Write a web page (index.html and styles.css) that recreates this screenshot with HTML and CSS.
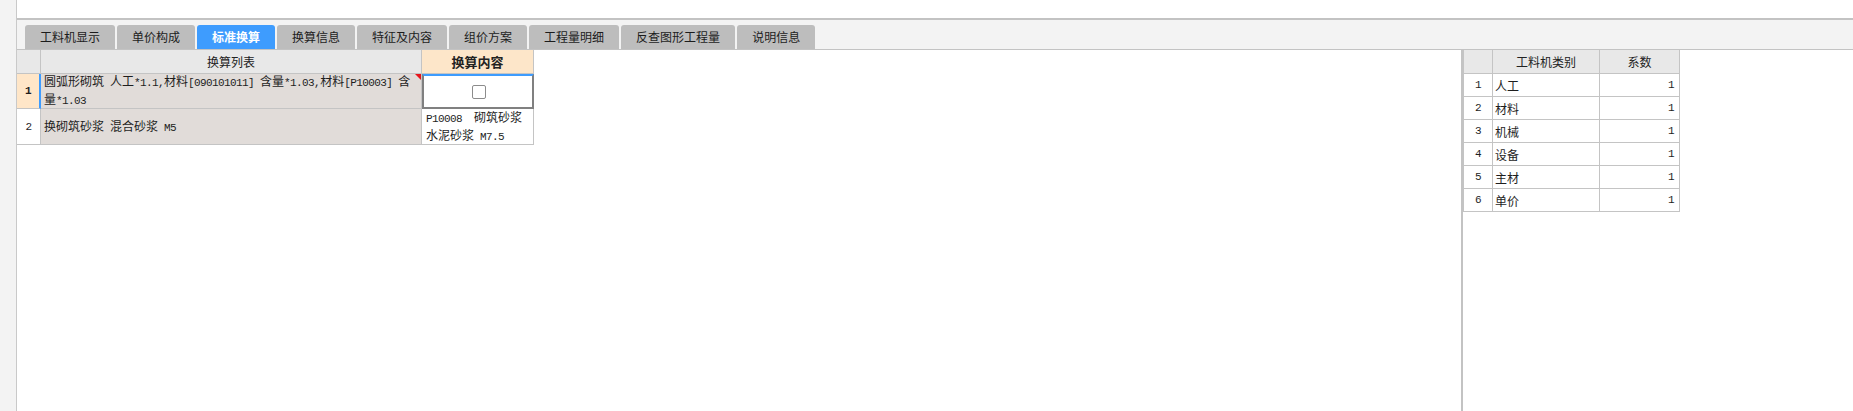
FILE: index.html
```html
<!DOCTYPE html>
<html lang="zh-CN">
<head>
<meta charset="utf-8">
<title>标准换算</title>
<link rel="stylesheet" href="styles.css">
</head>
<body>
<div class="app">
  <aside class="rail"></aside>
  <div class="main">
    <div class="topbar"></div>
    <nav class="tabs">
      <div class="tab">工料机显示</div>
      <div class="tab">单价构成</div>
      <div class="tab on">标准换算</div>
      <div class="tab">换算信息</div>
      <div class="tab">特征及内容</div>
      <div class="tab">组价方案</div>
      <div class="tab">工程量明细</div>
      <div class="tab">反查图形工程量</div>
      <div class="tab">说明信息</div>
    </nav>
    <div class="panes">
      <section class="pane-left">
        <div class="conv">
          <div class="hc"></div>
          <div class="hc">换算列表</div>
          <div class="hc hl">换算内容</div>

          <div class="c num cur"><span class="en">1</span></div>
          <div class="c list"><span>圆弧形砌筑<span class="en"> </span>人工<span class="en">*1.1,</span>材料<span class="en">[090101011] </span>含量<span class="en">*1.03,</span>材料<span class="en">[P10003] </span>含量<span class="en">*1.03</span></span><i class="flag"></i></div>
          <div class="c val sel"><span class="chk"></span></div>

          <div class="c num"><span class="en">2</span></div>
          <div class="c list"><span>换砌筑砂浆<span class="en"> </span>混合砂浆<span class="en"> M5</span></span></div>
          <div class="c val"><span><span class="en">P10008  </span>砌筑砂浆<span class="en"> </span>水泥砂浆<span class="en"> M7.5</span></span></div>
        </div>
      </section>
      <section class="pane-right">
        <div class="coef">
          <div class="h"></div>
          <div class="h">工料机类别</div>
          <div class="h">系数</div>

          <div class="n en">1</div><div class="t">人工</div><div class="v en">1</div>
          <div class="n en">2</div><div class="t">材料</div><div class="v en">1</div>
          <div class="n en">3</div><div class="t">机械</div><div class="v en">1</div>
          <div class="n en">4</div><div class="t">设备</div><div class="v en">1</div>
          <div class="n en">5</div><div class="t">主材</div><div class="v en">1</div>
          <div class="n en">6</div><div class="t">单价</div><div class="v en">1</div>
        </div>
      </section>
    </div>
  </div>
</div>
</body>
</html>
```

FILE: styles.css
```css
* { box-sizing: border-box; }
html, body { margin: 0; padding: 0; }
body {
  width: 1853px;
  height: 411px;
  overflow: hidden;
  background: #fff;
  font-family: "Noto Sans CJK SC", "Noto Sans", sans-serif;
  font-size: 12px;
  color: #1e1e1e;
}
.en {
  font-family: "Liberation Mono", "Noto Sans CJK SC", monospace;
  font-size: 11px;
  letter-spacing: -0.6px;
  white-space: pre-wrap;
}
.app { display: flex; height: 411px; }
.rail {
  flex: none;
  width: 17px;
  background: #f3f3f3;
  border-right: 1px solid #c9c9c9;
}
.main { flex: 1; display: flex; flex-direction: column; min-width: 0; }
.topbar { height: 18px; flex: none; }
.tabs {
  flex: none;
  display: flex;
  gap: 2px;
  height: 32px;
  padding: 5px 0 0 8px;
  background: #f3f3f3;
  border-top: 2px solid #c3c3c3;
  border-bottom: 1px solid #c3c3c3;
}
.tab {
  height: 24px;
  line-height: 24px;
  padding: 0 15px;
  background: #bdbdbd;
  border-radius: 3px 3px 0 0;
  color: #1c1c1c;
  white-space: nowrap;
}
.tab.on { background: #3e9cfe; color: #fff; font-weight: bold; }

.panes { flex: 1; display: flex; min-height: 0; }
.pane-left { flex: none; width: 1444px; }
.pane-right { flex: 1; border-left: 2px solid #c3c3c3; }

.conv {
  display: grid;
  grid-template-columns: 24px 381px 112px;
  grid-template-rows: 24px 35px 36px;
}
.conv > div {
  border-right: 1px solid #c4c4c4;
  border-bottom: 1px solid #c4c4c4;
}
.hc {
  background: #e8e8e8;
  display: flex;
  align-items: center;
  justify-content: center;
  color: #222;
}
.hc.hl { background: #fde6c9; font-weight: bold; font-size: 13px; }
.c { display: flex; align-items: center; }
.num { justify-content: center; background: #fff; }
.num.cur { background: #ffe6c8; font-weight: bold; }
.conv > .num.cur { border-right: 2px solid #3e9cfe; }
.list {
  position: relative;
  background: #e1dcd9;
  padding: 0 4px 0 3px;
  line-height: 16px;
}
.val { background: #fff; padding: 0 3px 0 4px; line-height: 16px; }
.conv > .val.sel {
  justify-content: center;
  border: 2px solid #808080;
  border-top-color: #3e9cfe;
}
.chk {
  width: 14px;
  height: 14px;
  border: 1px solid #8c8c8c;
  border-radius: 2px;
  background: #fff;
}
.flag {
  position: absolute;
  top: 0;
  right: 0;
  width: 0;
  height: 0;
  border-top: 6px solid #e8141b;
  border-left: 6px solid transparent;
}

.coef {
  display: grid;
  width: max-content;
  grid-template-columns: 29px 107px 80px;
  grid-template-rows: 24px;
  grid-auto-rows: 23px;
  border-left: 1px solid #c4c4c4;
}
.coef > div {
  border-right: 1px solid #c4c4c4;
  border-bottom: 1px solid #c4c4c4;
  display: flex;
  align-items: center;
}
.coef .h { background: #e8e8e8; justify-content: center; color: #222; }
.coef .n { justify-content: center; }
.coef .t { padding-left: 2px; }
.coef .v { justify-content: flex-end; padding-right: 5px; }
```
